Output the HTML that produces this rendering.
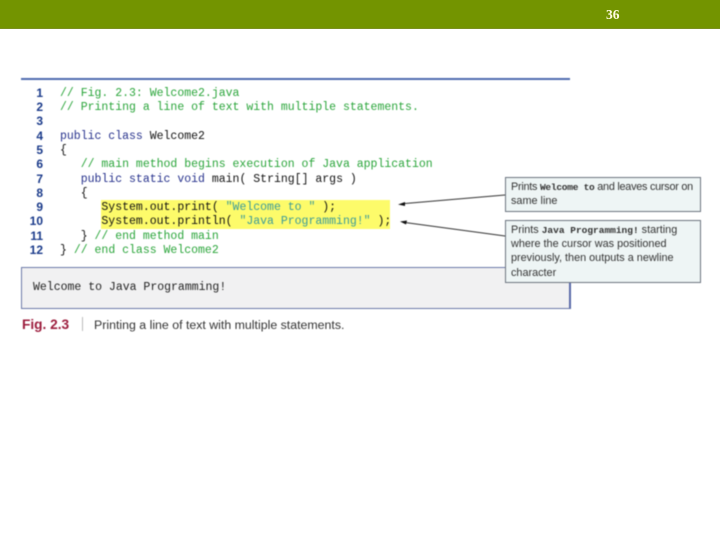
<!DOCTYPE html>
<html><head><meta charset="utf-8"><style>
html,body{margin:0;padding:0;background:#fff}
body{width:720px;height:540px;position:relative;overflow:hidden}
div{position:absolute}
.top{left:0;top:0;width:720px;height:28px;background:#739400;border-bottom:1px solid #7a8f20}
.pg{left:606px;top:7px;font:bold 13.5px "Liberation Serif",serif;color:#fffbe0;line-height:15px}
.wrap{left:0;top:0;width:720px;height:540px;filter:blur(.4px)}
.c{left:60px;font:11.5px/14px "Liberation Mono",monospace;white-space:pre;color:#111;height:14px}
.n{left:20px;width:23px;text-align:right;font:bold 12px/14px "Liberation Sans",sans-serif;color:#1a3a8a;margin-top:-1px}
.g{color:#2aa53a}.b{color:#26318c}.t{color:#3a9a9a}
.note{background:#eef5f5;border:1px solid #6d7580;box-sizing:border-box;font:10.85px/14.2px "Liberation Sans",sans-serif;color:#333;padding:0 5px;white-space:nowrap}
.note span{font:bold 9.5px "Liberation Mono",monospace}
</style></head><body>
<div class="top"></div><div class="pg">36</div>
<div class="wrap">
<div style="left:21px;top:78px;width:549px;height:2px;background:#4f6cb0"></div>
<div style="left:101px;top:200px;width:289px;height:29px;background:#fdfb6a"></div>
<div class="n" style="top:87px">1</div><div class="c g" style="top:87px">// Fig. 2.3: Welcome2.java</div>
<div class="n" style="top:101px">2</div><div class="c g" style="top:101px">// Printing a line of text with multiple statements.</div>
<div class="n" style="top:115px">3</div>
<div class="n" style="top:130px">4</div><div class="c" style="top:130px"><span class="b">public class</span> Welcome2</div>
<div class="n" style="top:144px">5</div><div class="c" style="top:144px">{</div>
<div class="n" style="top:158px">6</div><div class="c g" style="top:158px">   // main method begins execution of Java application</div>
<div class="n" style="top:173px">7</div><div class="c" style="top:173px">   <span class="b">public static void</span> main( String[] args )</div>
<div class="n" style="top:187px">8</div><div class="c" style="top:187px">   {</div>
<div class="n" style="top:201px">9</div><div class="c" style="top:201px">      System.out.print( <span class="t">"Welcome to "</span> );</div>
<div class="n" style="top:215px">10</div><div class="c" style="top:215px">      System.out.println( <span class="t">"Java Programming!"</span> );</div>
<div class="n" style="top:230px">11</div><div class="c" style="top:230px">   } <span class="g">// end method main</span></div>
<div class="n" style="top:244px">12</div><div class="c" style="top:244px">} <span class="g">// end class Welcome2</span></div>
<div style="left:21px;top:267px;width:550px;height:42px;box-sizing:border-box;background:#f1f1f2;border:1px solid #6c7aa8;border-right:2px solid #5a6aa8"></div>
<div class="c" style="left:33px;top:280.500px;color:#222">Welcome to Java Programming!</div>
<div style="left:22px;top:316.500px;font:bold 13.7px/16px 'Liberation Sans',sans-serif;color:#9c1c3c">Fig. 2.3</div>
<div style="left:82px;top:317px;width:1px;height:14px;background:#bbb"></div>
<div style="left:94px;top:316.500px;font:12.35px/16px 'Liberation Sans',sans-serif;color:#333;white-space:nowrap">Printing a line of text with multiple statements.</div>
<svg style="position:absolute;left:0;top:0" width="720" height="540">
<path d="M505 195 L405 203.500" stroke="#333" stroke-width="1" fill="none"/><path d="M398 204.500 L405 202 L405 206 Z" fill="#111"/>
<path d="M505 236 L405 222.500" stroke="#333" stroke-width="1" fill="none"/><path d="M400 221.500 L407 220.500 L406 224.500 Z" fill="#111"/>
</svg>
<div class="note" style="left:505px;top:177px;width:196px;height:35px;padding-top:2px"><span style="font:inherit;letter-spacing:-.25px">Prints <span>Welcome to</span> and leaves cursor on</span><br>same line</div>
<div class="note" style="left:505px;top:220px;width:196px;height:63px;padding-top:2px">Prints <span>Java Programming!</span> starting<br>where the cursor was positioned<br>previously, then outputs a newline<br>character</div>
</div>
</body></html>
